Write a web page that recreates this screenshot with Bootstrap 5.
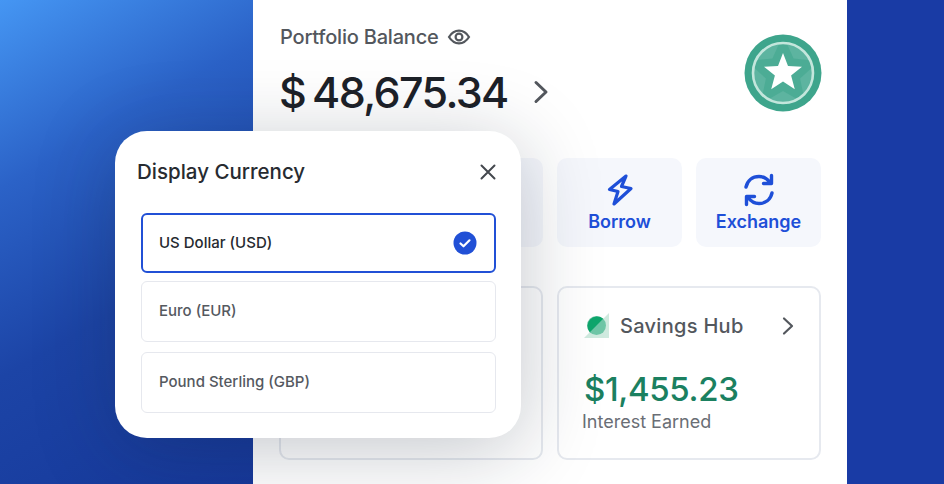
<!DOCTYPE html>
<html lang="en">
<head>
    <meta charset="UTF-8">
    <meta name="viewport" content="width=device-width, initial-scale=1.0">
    <title>Display Currency</title>
    <link href="https://cdn.jsdelivr.net/npm/bootstrap@5.3.0/dist/css/bootstrap.min.css" rel="stylesheet">
    <style>
        html, body { height: 484px; overflow: hidden; }
        body { font-family: Inter, "Liberation Sans", sans-serif; color: #212529; background: #17389a; }
        .stage { position: relative; height: 484px; }
        .side-left { width: 253px; background: linear-gradient(150deg, #4596f3 0%, #2b62c7 30%, #1c44a6 60%, #16389a 100%); }
        .side-right { width: 97px; background: #193ba5; }
        .panel { width: 594px; background: #fff; padding: 24px 25px 0 26px; }
        .bal-label { font-size: 20px; color: #53575d; line-height: 26px; padding-left: 1px; font-weight: 500; letter-spacing: -.2px; }
        .bal-amount { font-size: 43px; font-weight: 500; line-height: 52px; letter-spacing: -1.6px; word-spacing: -3px; color: #1d2128; }
        .medal { width: 78px; height: 78px; margin-top: 10px; }
        .tile-row { margin-top: 40px; gap: 14px; }
        .tile { width: 125px; height: 89px; background: #f5f7fc; border-radius: 10px; color: #1e4fd8; font-size: 18px; font-weight: 600; line-height: 22px; }
        .tile svg { margin-bottom: 4px; }
        .card-row { margin-top: 39px; gap: 14px; }
        .hub { width: 264px; height: 174px; border: 2px solid #e6e9ef; border-radius: 10px; padding: 25px 24px 0 25px; }
        .hub-title { font-size: 20px; color: #53575d; line-height: 26px; font-weight: 500; letter-spacing: .3px; }
        .hub-title .hub-mark { margin-right: 10px; }
        .hub-amount { font-size: 33px; font-weight: 500; color: #1b8060; line-height: 40px; margin-top: 30px; letter-spacing: -.35px; }
        .hub-note { font-size: 18px; color: #6a6e75; line-height: 24px; margin-left: -2px; margin-top: 1px; }
        .sheet { position: absolute; left: 115px; top: 131px; width: 406px; height: 307px; background: #fff; border-radius: 32px; padding: 26px 25px 0 22px; box-shadow: 0 12px 80px rgba(20, 30, 50, .25); }
        .sheet-title { font-size: 20.5px; font-weight: 500; line-height: 30px; color: #272b31; }
        .opt-list { margin-left: 4px; margin-top: 26px; }
        .opt { height: 61px; margin-bottom: 10px; padding: 0 17px; border: 1px solid #e6e8ee; border-radius: 6px; font-size: 15px; font-weight: 500; color: #55595f; }
        .opt-on { height: 60px; margin-bottom: 8px; border: 2px solid #2150d6; color: #262a30; padding: 0 17px 0 16px; }
    </style>
</head>
<body>
    <div class="stage d-flex">
        <div class="side-left flex-shrink-0"></div>
        <div class="panel flex-shrink-0">
            <div class="d-flex justify-content-between">
                <div>
                    <div class="bal-label d-flex align-items-center gap-2">
                        Portfolio Balance
                        <svg width="24" height="24" viewBox="0 0 24 24" fill="none" stroke="#53575d" stroke-width="2.200"><path d="M2 12c2.600-4.200 6-6.300 10-6.300s7.400 2.100 10 6.300c-2.600 4.200-6 6.300-10 6.300S4.600 16.200 2 12z"/><circle cx="12" cy="12" r="3.400"/></svg>
                    </div>
                    <div class="d-flex align-items-center mt-3">
                        <span class="bal-amount">$ 48,675.34</span>
                        <svg class="ms-4" width="18" height="26" viewBox="0 0 18 26" fill="none" stroke="#53575d" stroke-width="3" stroke-linecap="round" stroke-linejoin="round"><path d="M4 3.500 14 13 4 22.500"/></svg>
                    </div>
                </div>
                <svg class="medal" viewBox="0 0 78 78">
                    <circle cx="39" cy="39" r="38.500" fill="#3ea58c"/>
                    <circle cx="39" cy="39" r="30" fill="#5db4a0"/>
                    <path d="M39 1 49.600 24.400 75.100 27.300 56.100 44.600 61.300 69.700 39 57 16.700 69.700 21.900 44.600 2.900 27.300 28.400 24.400z" fill="#3ea58c" opacity=".55"/>
                    <circle cx="39" cy="39" r="30" fill="none" stroke="#c3e6dc" stroke-width="2.600"/>
                    <path d="M39 19 44 32.100 58 32.800 47.100 41.600 50.800 55.200 39 47.500 27.200 55.200 30.900 41.600 20 32.800 34 32.100z" fill="#fff"/>
                </svg>
            </div>

            <div class="tile-row d-flex">
                <div class="tile"></div>
                <div class="tile"></div>
                <div class="tile d-flex flex-column align-items-center justify-content-center">
                    <svg width="28" height="34" viewBox="0 0 28 34" fill="none" stroke="#1e4fd8" stroke-width="3.200" stroke-linejoin="round" stroke-linecap="round"><path d="M20 3 3.500 16.500 12 18.500 8 31 25 15.500 15.500 13.500z"/></svg>
                    Borrow
                </div>
                <div class="tile d-flex flex-column align-items-center justify-content-center">
                    <svg width="32" height="34" viewBox="0 0 32 34" fill="none" stroke="#1e4fd8" stroke-width="3.400" stroke-linecap="round" stroke-linejoin="round"><path d="M3 14C4.500 7.500 9.500 3.500 16 3.500c4.500 0 8 2 11 6"/><path d="M28.500 2.500v8h-8"/><path d="M29 20c-1.500 6.500-6.500 10.500-13 10.500-4.500 0-8-2-11-6"/><path d="M3.500 31.500v-8h8"/></svg>
                    Exchange
                </div>
            </div>

            <div class="card-row d-flex">
                <div class="hub"></div>
                <div class="hub">
                    <div class="hub-title d-flex align-items-center">
                        <svg class="hub-mark" width="26" height="26" viewBox="0 0 26 26"><path d="M0 25 25 0v25z" fill="#cfeadf"/><circle cx="12.500" cy="12.500" r="9.500" fill="#6fc6a7"/><path d="M5.800 19.200A9.500 9.500 0 0 1 19.200 5.800z" fill="#0ea66c"/></svg>
                        <span class="flex-grow-1">Savings Hub</span>
                        <svg width="14" height="20" viewBox="0 0 14 20" fill="none" stroke="#53575d" stroke-width="2.200" stroke-linecap="round" stroke-linejoin="round"><path d="M3 2.500 11 10l-8 7.500"/></svg>
                    </div>
                    <div class="hub-amount">$1,455.23</div>
                    <div class="hub-note">Interest Earned</div>
                </div>
            </div>
        </div>
        <div class="side-right flex-shrink-0"></div>

        <div class="sheet">
            <div class="d-flex justify-content-between align-items-center">
                <span class="sheet-title">Display Currency</span>
                <svg width="16" height="16" viewBox="0 0 16 16" fill="none" stroke="#44484e" stroke-width="2" stroke-linecap="round"><path d="M1.500 1.500l13 13M14.500 1.500l-13 13"/></svg>
            </div>
            <div class="opt-list">
                <div class="opt opt-on d-flex align-items-center justify-content-between">
                    US Dollar (USD)
                    <svg width="24" height="24" viewBox="0 0 24 24"><circle cx="12" cy="12" r="11.500" fill="#2150d6"/><path d="M7.500 12.500l3 2.800 6-6" fill="none" stroke="#fff" stroke-width="2.200" stroke-linecap="round" stroke-linejoin="round"/></svg>
                </div>
                <div class="opt d-flex align-items-center">Euro (EUR)</div>
                <div class="opt d-flex align-items-center">Pound Sterling (GBP)</div>
            </div>
        </div>
    </div>
    <script src="https://cdn.jsdelivr.net/npm/bootstrap@5.3.0/dist/js/bootstrap.bundle.min.js"></script>
</body>
</html>
